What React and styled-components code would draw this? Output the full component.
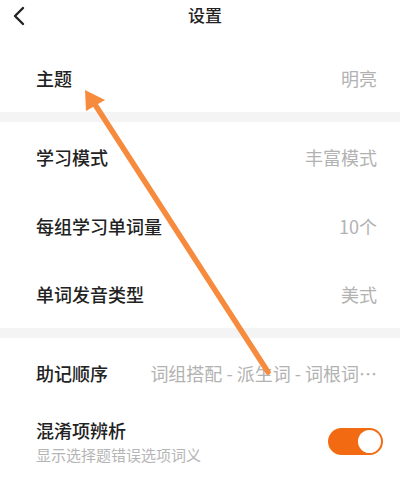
import React from "react";
import styled, { createGlobalStyle } from "styled-components";

const Global = createGlobalStyle`
  html, body { margin: 0; padding: 0; background: #fff; }
  body { font-family: "Noto Sans CJK SC", "Noto Sans", sans-serif; }
  * { box-sizing: border-box; }
`;

const Page = styled.div`
  position: relative;
  width: 400px;
  height: 496px;
  overflow: hidden;
  background: #fff;
  display: flex;
  flex-direction: column;
`;

const Header = styled.div`
  height: 44px;
  display: flex;
  justify-content: center;
  align-items: flex-start;
  padding: 3px 0 0 10px;
  position: relative;
`;

const Back = styled.div`
  position: absolute;
  left: 12px;
  top: 6px;
  width: 16px;
  height: 20px;
  display: flex;
`;

const Title = styled.div`
  font-size: 17px;
  line-height: 24px;
  font-weight: 500;
  color: #222;
`;

const Band = styled.div`
  height: 10px;
  background: #f4f4f4;
`;

const Section = styled.div`
  display: flex;
  flex-direction: column;
`;

const Row = styled.div`
  height: ${(p) => p.h}px;
  display: flex;
  align-items: center;
  justify-content: space-between;
  padding: 0 23px 0 36px;
  gap: 20px;
`;

const Label = styled.div`
  font-size: 18px;
  line-height: 24px;
  font-weight: 500;
  color: #222;
  white-space: nowrap;
  flex-shrink: 0;
`;

const Value = styled.div`
  font-size: 18px;
  line-height: 24px;
  color: #b2b2b2;
  white-space: nowrap;
  overflow: hidden;
  text-overflow: ellipsis;
  min-width: 0;
`;

const Stack = styled.div`
  display: flex;
  flex-direction: column;
  gap: 3px;
`;

const Sub = styled.div`
  font-size: 15px;
  line-height: 20px;
  color: #b5b5b5;
`;

const Toggle = styled.div`
  width: 55px;
  height: 27px;
  border-radius: 14px;
  background: #f26b12;
  display: flex;
  align-items: center;
  justify-content: flex-end;
  padding: 0 2px;
  margin-right: -6px;
`;

const Knob = styled.div`
  width: 23px;
  height: 23px;
  border-radius: 50%;
  background: #fff;
`;

const Overlay = styled.svg`
  position: absolute;
  left: 0;
  top: 0;
  pointer-events: none;
`;

export default function App() {
  return (
    <>
      <Global />
      <Page>
        <Header>
          <Back>
            <svg width="16" height="20" viewBox="0 0 16 20">
              <path d="M11 2 L3 10 L11 18" fill="none" stroke="#222" strokeWidth="2.4" strokeLinecap="round" strokeLinejoin="round" />
            </svg>
          </Back>
          <Title>设置</Title>
        </Header>
        <Section>
          <Row h={68}>
            <Label>主题</Label>
            <Value>明亮</Value>
          </Row>
        </Section>
        <Band />
        <Section>
          <Row h={69}>
            <Label>学习模式</Label>
            <Value>丰富模式</Value>
          </Row>
          <Row h={69}>
            <Label>每组学习单词量</Label>
            <Value>10个</Value>
          </Row>
          <Row h={68}>
            <Label>单词发音类型</Label>
            <Value>美式</Value>
          </Row>
        </Section>
        <Band />
        <Section>
          <Row h={70}>
            <Label>助记顺序</Label>
            <Value>词组搭配 - 派生词 - 词根词…</Value>
          </Row>
          <Row h={66}>
            <Stack>
              <Label>混淆项辨析</Label>
              <Sub>显示选择题错误选项词义</Sub>
            </Stack>
            <Toggle>
              <Knob />
            </Toggle>
          </Row>
        </Section>
        <Overlay width="400" height="496" viewBox="0 0 400 496">
          <line x1="268" y1="372" x2="94" y2="103" stroke="#f68b3d" strokeWidth="5.5" strokeLinecap="round" />
          <polygon points="85,90 86,111 105,100" fill="#f68b3d" />
        </Overlay>
      </Page>
    </>
  );
}
